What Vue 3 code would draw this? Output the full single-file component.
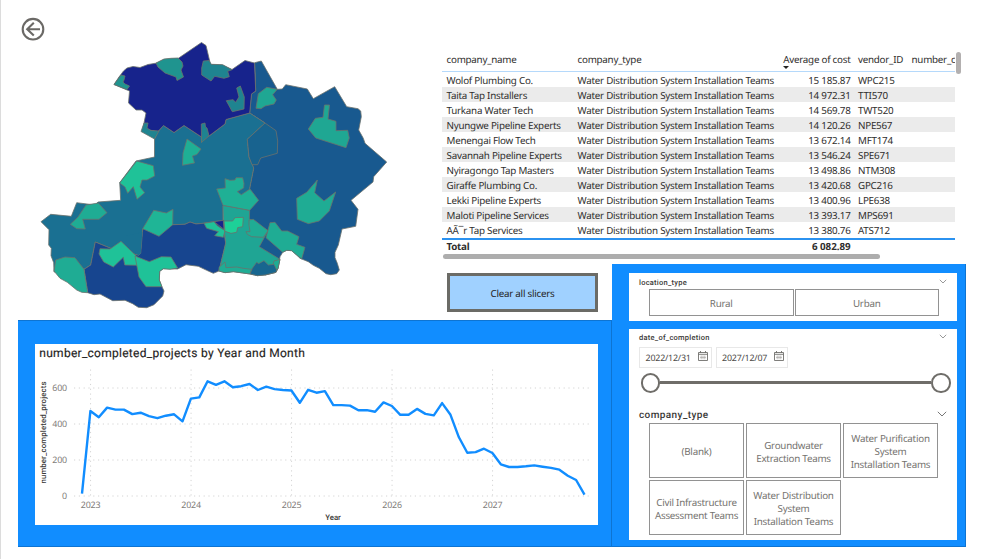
<script setup>
const rows = [
  ['Wolof Plumbing Co.', '15 185.87', 'WPC215'],
  ['Taita Tap Installers', '14 972.31', 'TTI570'],
  ['Turkana Water Tech', '14 569.78', 'TWT520'],
  ['Nyungwe Pipeline Experts', '14 120.26', 'NPE567'],
  ['Menengai Flow Tech', '13 672.14', 'MFT174'],
  ['Savannah Pipeline Experts', '13 546.24', 'SPE671'],
  ['Nyiragongo Tap Masters', '13 498.86', 'NTM308'],
  ['Giraffe Plumbing Co.', '13 420.68', 'GPC216'],
  ['Lekki Pipeline Experts', '13 400.96', 'LPE638'],
  ['Maloti Pipeline Services', '13 393.17', 'MPS691'],
  ['AÃ¯r Tap Services', '13 380.76', 'ATS712'],
]

const companyTypes = [
  ['(Blank)'],
  ['Groundwater', 'Extraction Teams'],
  ['Water Purification', 'System', 'Installation Teams'],
  ['Civil Infrastructure', 'Assessment Teams'],
  ['Water Distribution', 'System', 'Installation Teams'],
]

// Monthly totals, December 2022 to December 2027
const totals = [
  13,
  472, 437, 491, 480, 480, 455, 463, 444, 432, 446, 454, 415,
  541, 548, 637, 618, 637, 604, 610, 622, 589, 607, 594, 589,
  586, 518, 590, 574, 583, 505, 505, 502, 476, 477, 468, 520,
  500, 451, 451, 484, 456, 448, 516, 451, 326, 240, 244, 263,
  239, 176, 161, 161, 165, 170, 163, 156, 146, 113, 89, 7,
]
const xOf = (i) => 47 + i * 8.375
const yOf = (v) => 152 - v * 0.18
const line = totals.map((v, i) => `${xOf(i).toFixed(1)},${yOf(v).toFixed(1)}`).join(' ')
const years = [2023, 2024, 2025, 2026, 2027].map((y, i) => ({ y, x: xOf(1 + i * 12) }))
const ticks = [0, 200, 400, 600].map((v) => ({ v, y: yOf(v) }))

const regions = [
  { fill: '#18598f', p: '254.7,62.7 261.3,61 277.3,89.3 282.3,89 285.7,84.7 307.3,89 313.3,98.7 334.7,86.7 346.7,106.7 358,108.7 360.7,111 361.3,116.7 358.7,130 363.3,138.3 365,143.3 386.7,162 373.7,176.7 373,182 351,200.3 358,209.3 355.7,226.3 342,229 338.3,245 335,252.3 335,257.7 337.3,263.3 339.3,270 336.7,273.7 330.7,274.7 326,273.7 319.3,268.3 313.3,265.3 308.3,261.7 300,258.3 296.7,255 291.7,250.7 286.7,250.3 282.7,252.3 280,256.7 278,268.3 276,272.3 265,275 250,260 245,210 249.7,188 253.7,168 252,164.7 247.3,139.3 265,123 249.7,113 251.5,94 255.7,91' },
  { fill: '#1a7092', p: '249.7,113 265,123 247.3,139.3 249,157 253.7,168 249.7,188 249,210 223,206 223,221 203,223.3 196,224 190,222 185,224.3 173,224.7 142.7,229 140.7,253.3 138.7,255.3 110,248 95.3,242 90.7,265 84,269.3 54,272 53.7,262.7 51,255.7 51.3,248.3 48.7,245 49,229.7 41,221.7 50.7,214.3 71.3,216.3 76.7,202.7 95,205 98,202 120.7,200.3 119.7,182.7 136,161 154.5,157 154.5,139 158,131.5 163.5,125.5 174,132.5 184,125.5 201.5,137 209,136 225,124 226,119.5' },
  { fill: '#17238c', p: '114,84.5 119,77 123.5,71 127,68 133,66.5 140,67.5 148,64.5 157,63 164,59.5 178,58.5 201.5,42.5 206,45.5 210.5,64.5 222,65 232,69.5 245,60.5 254.5,63 255.7,91 251.5,94 249.7,113 226,119.5 225,124 209,136 201.5,142 201.5,137 184,125.5 174,132.5 163.5,125.5 158,131.5 149,130 143,128 146,113 142,110 136,110 128.5,103 129.5,91' },
  { fill: '#17458f', p: '87.7,292.7 84,269.3 90.7,265 95.3,242 110,248 138.7,255.3 140.7,253.3 142.7,229 173,224.7 185,224.3 190,222 196,224 203,223.3 224,220.3 224,231 225.7,243.3 219,271 213.3,273.3 206.7,270.3 198.3,266.3 186,264.7 177.7,269 163.3,268.7 159.7,271.3 159.3,280 161.3,285.3 164,291 162.7,296 154,304.7 146.7,307.7 138.3,307.3 132.7,303.7 125,300.3 112.7,300.7 100,294 94,294.7' },
  { fill: '#1a7092', p: '110,248 121,240 126,236 142.3,232 140.7,253.3 138.7,255.3 121,243', plain: true },
  { fill: '#18638f', p: '265,123 276,130.7 277.7,141 277.3,153.3 260.7,158 257.7,164.7 252,164.7 249,157 247.3,139.3' },
  { fill: '#1f948f', p: '114,84.5 121,75 125,76 124,80 123,82 125,84 129.5,86 127,89.5' },
  { fill: '#1f948f', p: '156,63 164,59 171,58.3 178,58 182,62 183,66 181,70 183.5,77 177,80.5 176,77 165,73 158,67' },
  { fill: '#1f8490', p: '203.3,61 209,60.5 211.3,64.3 222.7,64.7 232,69.7 227.7,71.3 229.3,76.7 224,78.3 214.7,76.3 211,81 201.7,75 201.7,68' },
  { fill: '#1f8490', p: '236.7,88 240.3,86 244.3,97 244,109 232.3,111.7 226.3,100.7 233,99.7 235.7,102.3 239,97' },
  { fill: '#1f8490', p: '144,123 148,123 147,128 151,130.5 159,131 154.5,139 141,131.5' },
  { fill: '#1f8490', p: '201.3,124 205,123 205.5,127 207,128 209,135.7 201.5,142.5' },
  { fill: '#1faf95', p: '187,139 201,149 197,154.5 192.5,156 194.5,163 182.5,165.3 183,153' },
  { fill: '#1fa793', p: '258.3,93.7 266.7,87.3 277.3,89.3 272.7,94.7 276.3,100 274,104 265,106 261,108.7 256,108.3' },
  { fill: '#1fa793', p: '324.5,105 329.5,105 328,119 336,121.3 336,130.7 347.7,130.3 349.3,138 346,147.7 315.7,138 308.3,129 315.3,118.3 323,117.3' },
  { fill: '#1fc298', p: '136.7,161 153.3,165.7 154.7,176 147,180 142,180 140,187 144.7,192.7 137,199.3 133.3,186.7 127.7,193.3 125,187 119.7,183' },
  { fill: '#1fac94', p: '86,205 98.3,203 107,212.7 99,219.3 82.7,219.3 85.3,229 76.7,228.7 70.3,224.3 78,217' },
  { fill: '#1fb596', p: '153.7,210.3 166.3,213 173,209.3 172.7,224.7 159,236.3 142.7,228.7' },
  { fill: '#1fc298', p: '100,248.7 110,249 121,241.3 136.7,256.3 138,265.3 124.7,265 123.3,257.3 113.3,267 103.7,262 99,254' },
  { fill: '#1fac94', p: '54,271 55.7,260 65,257 75,257.7 84,269.3 87.7,292.7 81.7,292.3 76.7,290 67.3,282.3 60,278.3' },
  { fill: '#1fc298', p: '135,256 149.3,261.7 161.3,256.7 171,257 177.7,268 170,269.3 163.3,268.7 159.7,271.3 159.3,280 162,286.7 146,286.7 139,277' },
]

// South-east districts, drawn on a grid three times finer
const districts = [
  { fill: '#1fa594', p: '69,136 149,151 148,176 204,212 178,260 240,298 234,325 228,337 195,345 172,347 150,342 100,335 75,338 57,333 77,250 70,182' },
  { fill: '#1fb095', p: '75,56 90,61 105,60 108,53 128,53 132,70 131,84 112,95 124,104 150,87 176,121 149,151 69,136 50,87 76,84' },
  { fill: '#17238c', p: '42,185 70,181 72,208' },
  { fill: '#1fc298', p: '12,190 42,185 52,197 75,212 70,232 44,227 55,215 20,205' },
  { fill: '#1dd098', p: '72,183 98,183 105,173 130,172 128,200 113,203 110,217 93,220 75,214' },
  { fill: '#1fac94', p: '147,180 160,178 204,212 190,232 155,230 142,223 138,215 150,215 147,195' },
  { fill: '#1fac94', p: '210,188 225,187 245,213 263,213 297,230 290,253 315,262 305,297 290,285 275,272 260,271 248,277 198,233' },
  { fill: '#1fac94', p: '290,115 320,97 352,60 344,98 372,123 407,96 388,153 358,183 325,191 292,178' },
  { fill: '#1fac94', p: '57,322 75,306 78,323 110,321 130,325 155,328 150,342 100,335 75,338 57,333' },
  { fill: '#1fac94', p: '240,298 222,303 218,318 230,330 234,325' },
  { fill: '#18668f', p: '157,325 170,307 176,311 192,302 205,315 222,313 230,330 228,337 195,345 172,347 150,342' },
]
</script>

<template>
  <main class="page">
    <section class="map">
      <svg width="425" height="320" viewBox="18 0 425 320">
        <g fill="none" stroke="#6b6966" stroke-width="2.1">
          <circle cx="33" cy="29.2" r="10.3" />
          <path d="M40 29.2H27.5M33.8 22.8 27.2 29.2 33.8 35.6" />
        </g>
        <g stroke="#6b716c" stroke-width="0.8" stroke-linejoin="round">
          <polygon v-for="(r, i) in regions" :key="i" :points="r.p" :fill="r.fill" :class="{ plain: r.plain }" />
        </g>
        <g transform="translate(200 160) scale(0.33333)" stroke="#6b716c" stroke-width="2.4" stroke-linejoin="round">
          <polygon v-for="(r, i) in districts" :key="i" :points="r.p" :fill="r.fill" />
        </g>
      </svg>
    </section>

    <section class="table">
      <div class="grid">
        <div class="row head">
          <span>company_name</span><span>company_type</span>
          <span class="num sorted">Average of cost</span><span>vendor_ID</span><span>number_c</span>
        </div>
        <div v-for="r in rows" :key="r[0]" class="row body">
          <span>{{ r[0] }}</span><span>Water Distribution System Installation Teams</span>
          <span class="num">{{ r[1] }}</span><span>{{ r[2] }}</span><span></span>
        </div>
        <div class="row total"><span>Total</span><span></span><span class="num">6 082.89</span></div>
        <div class="hbar"></div>
      </div>
      <div class="vbar"></div>
    </section>

    <section class="clear"><button>Clear all slicers</button></section>

    <section class="chart-panel">
      <svg class="chart" width="563" height="181" viewBox="0 0 563 181">
        <text class="title" x="4.3" y="13.2" textLength="265.5" lengthAdjust="spacing">number_completed_projects by Year and Month</text>
        <g class="gridlines">
          <line v-for="t in ticks" :key="t.v" x1="39" x2="555" :y1="t.y" :y2="t.y" />
          <line v-for="t in years" :key="t.y" :x1="t.x + 0.2" :x2="t.x + 0.2" y1="25.5" y2="152" />
        </g>
        <g class="labels">
          <text v-for="t in ticks" :key="t.v" x="32" :y="t.y + 3.2" text-anchor="end">{{ t.v }}</text>
          <text v-for="t in years" :key="t.y" :x="t.x + 0.2" y="164" text-anchor="middle">{{ t.y }}</text>
        </g>
        <text class="axis" transform="translate(11.3 139.5) rotate(-90)" textLength="102" lengthAdjust="spacing">number_completed_projects</text>
        <text class="axis" x="290.3" y="175.8" textLength="15.5" lengthAdjust="spacing">Year</text>
        <polyline :points="line" fill="none" stroke="#118dff" stroke-width="2.4" stroke-linejoin="round" />
      </svg>
    </section>

    <section class="slicers">
      <div class="card location">
        <header><h3>location_type</h3><svg class="chev" width="8" height="5" viewBox="0 0 8 5"><path d="M.8.8 4 4 7.2.8" /></svg></header>
        <div class="pair"><button>Rural</button><button>Urban</button></div>
      </div>
      <div class="card filters">
        <header><h3>date_of_completion</h3><svg class="chev" width="8" height="5" viewBox="0 0 8 5"><path d="M.8.8 4 4 7.2.8" /></svg></header>
        <div class="dates">
          <div v-for="d in ['2022/12/31', '2027/12/07']" :key="d" class="date">
            <span>{{ d }}</span>
            <svg width="10" height="10" viewBox="0 0 10 10"><path d="M.5 1.5h9v8h-9zM.5 3.3h9M2.5 0v2M7.5 0v2" fill="none" stroke="#716f6c" stroke-width=".9" /><path d="M3.2 4.5v3.8M5 4.5v3.8M6.8 4.5v3.8M2 6.4h6" stroke="#9a9896" stroke-width=".6" /></svg>
          </div>
        </div>
        <div class="slider"><i></i><b></b><i></i></div>
        <header class="big"><h3>company_type</h3><svg class="chev" width="10" height="6" viewBox="0 0 10 6"><path d="M.8.8 5 5 9.2.8" /></svg></header>
        <div class="tiles">
          <button v-for="(c, i) in companyTypes" :key="i"><span v-for="l in c" :key="l">{{ l }}</span></button>
        </div>
      </div>
    </section>
  </main>
</template>

<style>
body { margin: 0; background: #fff; overflow: hidden; }
</style>

<style scoped>
* { box-sizing: border-box; }
.page {
  width: 995px; height: 559px; padding-left: 17px; border-left: 1px solid #dcdcdc;
  display: grid; grid-template-columns: 425px 169px 354px; grid-template-rows: 264px 56px 227px;
  font-family: "Noto Sans", "Open Sans", sans-serif; font-size: 9.8px; letter-spacing: -0.24px; color: #2f2e2d; background: #fff;
  text-rendering: geometricPrecision;
}
button { font: inherit; letter-spacing: inherit; text-rendering: inherit; margin: 0; padding: 0; background: #fff; color: #75736f; border: 1px solid #929292; }
h3 { margin: 0; font-weight: 500; }
.map { grid-column: 1; grid-row: 1 / 3; }
.map svg { display: block; }
.plain { stroke: none; }

.table { grid-column: 2 / 4; grid-row: 1; display: flex; padding-top: 52px; margin-left: -1px; }
.grid { width: 513px; overflow: hidden; }
.row { display: grid; grid-template-columns: 131px 205px 68px 53px 51px; padding-left: 4.5px; height: 15px; line-height: 17px; white-space: nowrap; }
.num { text-align: right; }
.head { height: 20px; line-height: 16px; border-bottom: 1px solid #b5d9fb; }
.head .num { position: relative; direction: rtl; }
.row > :nth-child(4) { padding-left: 7.5px; }
.row > :nth-child(5) { padding-left: 8px; }
.sorted::after { content: ""; position: absolute; left: 0; top: 14px; border: 3px solid transparent; border-top-color: #252423; border-bottom: 0; }
.body:nth-child(odd) { background: #ebebeb; }
.total { height: 17px; line-height: 14px; border-top: 2px solid #2b92f0; font-weight: 700; margin-top: 1px; }
.total .num { letter-spacing: -.05px; }
.hbar { width: 437px; height: 5px; margin: -1px 0 0 1px; border-radius: 3px; background: #adadad; }
.vbar { width: 5px; height: 22px; margin-left: 1px; border-radius: 3px; background: #b3b0b0; }

.clear { grid-column: 2; grid-row: 2; padding: 9px 0 0 4px; }
.clear button { width: 151px; height: 39px; padding-top: 2px; border: 3px solid #6b6b66; background: #a0d1ff; color: #252423; }

.chart-panel { grid-column: 1 / 3; grid-row: 3; background: #118dff; border: 1px solid #0e74d2; border-left: 0; padding: 23px 0 0 17px; letter-spacing: 0; }
.chart { display: block; background: #fff; }
.title { font: 400 12px Roboto, sans-serif; fill: #252423; stroke: #252423; stroke-width: .15; }
.axis { font: 500 7.8px Roboto, sans-serif; fill: #3b3a38; }
.labels text { font-size: 8.9px; letter-spacing: -0.2px; fill: #7f7d7a; }
.gridlines line { stroke: #d4d4d4; stroke-width: 1; stroke-dasharray: 1.2 3.6; }

.slicers { grid-column: 3; grid-row: 2 / 4; background: #118dff; border-right: 1px solid #0e74d2; border-bottom: 1px solid #0e74d2; padding: 9px 8px 0 17px; }
.card { background: #fff; width: 328px; padding: 0 14px 0 10px; }
.location { height: 48px; margin-bottom: 8px; padding-top: 4px; }
.filters { height: 211px; padding-top: 3px; }
header { display: flex; justify-content: space-between; height: 12px; }
header h3 { font: 500 7.5px/11px Roboto, sans-serif; letter-spacing: .25px; color: #3b3a38; }
.chev { margin: 2px -4px 0 0; fill: none; stroke: #999; stroke-width: 1; }
.pair { display: flex; gap: 1px; width: 290px; margin-left: 10px; }
.pair button { flex: 1; height: 27px; padding-top: 2px; }
.dates { display: flex; gap: 4px; margin-top: 3px; }
.date { display: flex; align-items: center; justify-content: space-between; width: 72.5px; height: 21px; padding: 0 3px 0 5.5px; border: 1px solid #e8e8e8; font-size: 8.9px; letter-spacing: -0.2px; color: #4c4a48; }
.date svg { margin-top: -3px; }
.slider { display: flex; align-items: center; width: 310px; margin: 5px 0 0 1.5px; }
.slider i { width: 19.5px; height: 19.5px; border: 2px solid #6f6d69; border-radius: 50%; background: #fff; flex: none; }
.slider b { flex: 1; height: 3px; background: #6f6d69; }
.big { height: 15px; margin-top: 15px; }
.big h3 { font-size: 10px; line-height: 15px; letter-spacing: .4px; }
.big .chev { margin-top: 3px; stroke: #777; }
.tiles { display: grid; grid-template-columns: repeat(3, 95px); grid-auto-rows: 55px; gap: 2px; margin-left: 10px; }
.tiles button { display: flex; flex-direction: column; align-items: center; justify-content: center; line-height: 13px; padding-top: 3px; white-space: nowrap; }
</style>
